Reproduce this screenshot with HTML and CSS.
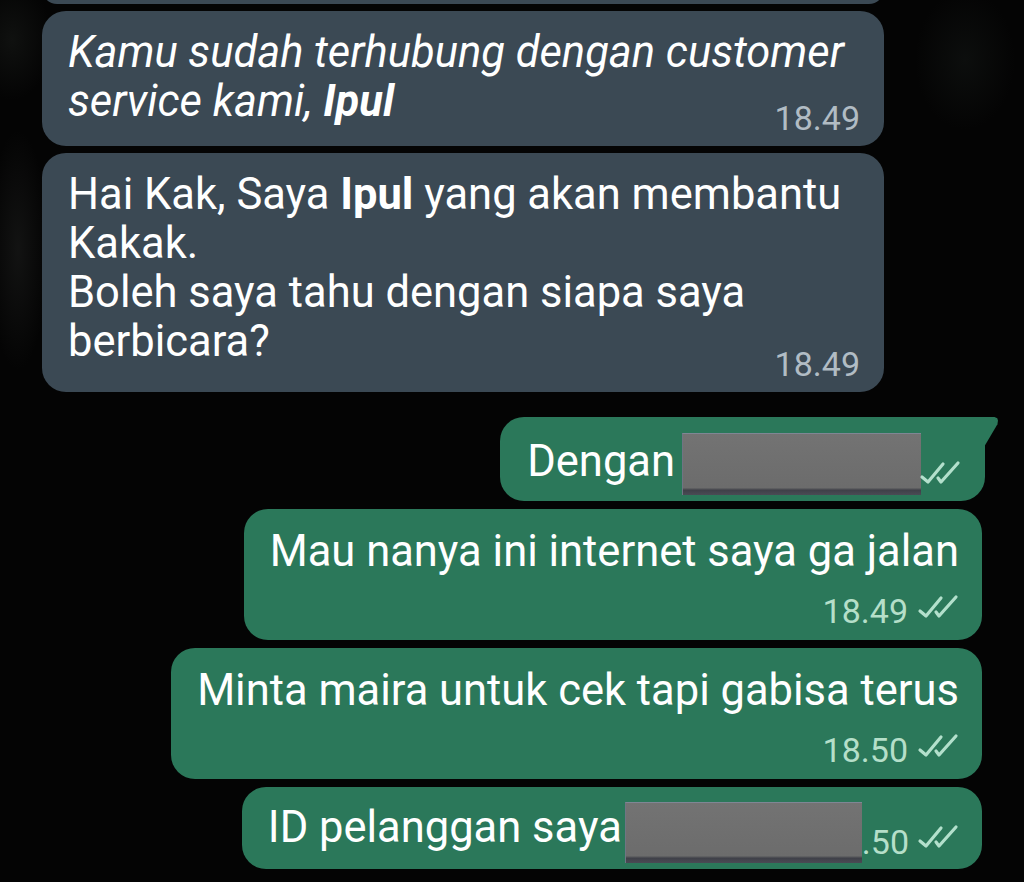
FILE: index.html
```html
<!DOCTYPE html>
<html lang="id">
<head>
<meta charset="utf-8">
<title>Chat</title>
<link rel="stylesheet" href="styles.css">
</head>
<body>
<div class="chat">
  <div class="bubble in cut"></div>

  <div class="bubble in first">
    <div class="text italic">Kamu sudah terhubung dengan customer service kami, <b>Ipul</b></div>
    <div class="meta meta-in">18.49</div>
  </div>

  <div class="bubble in second">
    <div class="text">Hai Kak, Saya <b>Ipul</b> yang akan membantu Kakak.<br>Boleh saya tahu dengan siapa saya berbicara?</div>
    <div class="meta meta-in meta-low">18.49</div>
  </div>

  <div class="bubble out tail row-bubble b-dengan">
    <span class="text t-dengan">Dengan</span>
    <span class="redact r-dengan"></span>
    <svg class="tick tick-dengan" viewBox="0 0 42 26" aria-hidden="true"><path d="M3 17 L9 22 L24 4 M19 18 L22 22 L39 3"/></svg>
  </div>

  <div class="bubble out">
    <div class="text">Mau nanya ini internet saya ga jalan</div>
    <div class="meta meta-out">18.49 <svg class="tick" viewBox="0 0 42 26" aria-hidden="true"><path d="M3 17 L9 22 L24 4 M19 18 L22 22 L39 3"/></svg></div>
  </div>

  <div class="bubble out">
    <div class="text">Minta maira untuk cek tapi gabisa terus</div>
    <div class="meta meta-out">18.50 <svg class="tick" viewBox="0 0 42 26" aria-hidden="true"><path d="M3 17 L9 22 L24 4 M19 18 L22 22 L39 3"/></svg></div>
  </div>

  <div class="bubble out row-bubble b-id">
    <span class="text t-id">ID pelanggan saya</span>
    <span class="redact r-id"></span>
    <span class="time-out t-50">.50</span>
    <svg class="tick tick-id" viewBox="0 0 42 26" aria-hidden="true"><path d="M3 17 L9 22 L24 4 M19 18 L22 22 L39 3"/></svg>
  </div>
</div>
</body>
</html>
```

FILE: styles.css
```css
* { box-sizing: border-box; }

html, body {
  margin: 0;
  padding: 0;
}

body {
  width: 1024px;
  height: 882px;
  overflow: hidden;
  font-family: Roboto, "Noto Sans", "Liberation Sans", sans-serif;
  color: #ffffff;
  background:
    radial-gradient(ellipse 30px 120px at 18px 250px, rgba(70, 72, 70, 0.22), rgba(0,0,0,0) 100%),
    radial-gradient(ellipse 50px 70px at 965px 60px, rgba(50, 60, 55, 0.18), rgba(0,0,0,0) 100%),
    radial-gradient(ellipse 40px 60px at 12px 40px, rgba(50, 55, 50, 0.25), rgba(0,0,0,0) 100%),
    #040404;
}

.chat {
  display: flex;
  flex-direction: column;
  padding: 0 42px;
}

.bubble {
  position: relative;
  border-radius: 24px;
}

.in {
  width: 842px;
  align-self: flex-start;
  background: #3b4954;
  padding: 17px 24px 10px 26px;
  margin-top: 7px;
}

.cut {
  height: 30px;
  margin-top: -26px;
  padding: 0;
}

.out {
  align-self: flex-end;
  background: #2b785a;
  padding: 18px 23px 11px 26px;
  margin-top: 8px;
}

.text {
  font-size: 43.5px;
  line-height: 49px;
}

.text b { font-weight: 700; }

.italic {
  font-style: italic;
}

.meta {
  font-size: 34px;
  line-height: 36px;
  text-align: right;
}

.meta-in {
  color: #b1bcc4;
  margin-top: -26px;
}

.meta-low { margin-top: -20px; }

.meta-out {
  color: #b5dfc9;
  margin-top: 17px;
  display: flex;
  justify-content: flex-end;
  align-items: flex-end;
  gap: 9px;
}

.meta-out .tick { margin-bottom: 9px; }

.tick {
  width: 42px;
  height: 26px;
  flex: none;
}

.tick path {
  fill: none;
  stroke: #b3e0cc;
  stroke-width: 3.2;
  stroke-linecap: round;
  stroke-linejoin: round;
}

.second { margin-top: 7px; }

.row-bubble {
  display: flex;
  align-items: flex-end;
}

.b-dengan {
  margin-top: 25px;
  margin-right: -3px;
  padding: 16px 24px 6px 27px;
  border-top-right-radius: 0;
}

.tail::after {
  content: "";
  position: absolute;
  top: 0;
  right: -13px;
  width: 14px;
  height: 30px;
  background: #2b785a;
  clip-path: polygon(0 0, 75% 0, 95% 4%, 100% 12%, 96% 24%, 0 100%);
}

.t-dengan { margin-bottom: 9px; }

.redact {
  display: block;
  flex: none;
  background: linear-gradient(180deg, #737373 0%, #6c6c6c 88%, #3f4048 92%, #4a4b55 100%);
  border-top: 1px solid #7f8694;
  border-left: 1px solid #6f7584;
}

.r-dengan {
  width: 239px;
  height: 62px;
  margin-left: 7px;
}

.tick-dengan { margin: 0 0 9px -2px; }

.b-id {
  padding: 15px 23px 6px 26px;
}

.t-id { margin-bottom: 11px; }

.r-id {
  width: 237px;
  height: 61px;
  margin-left: 3px;
}

.time-out {
  color: #b5dfc9;
  font-size: 34px;
  line-height: 36px;
}

.t-50 { margin: 0 8px 3px 0; }

.tick-id { margin-bottom: 13px; }
```
